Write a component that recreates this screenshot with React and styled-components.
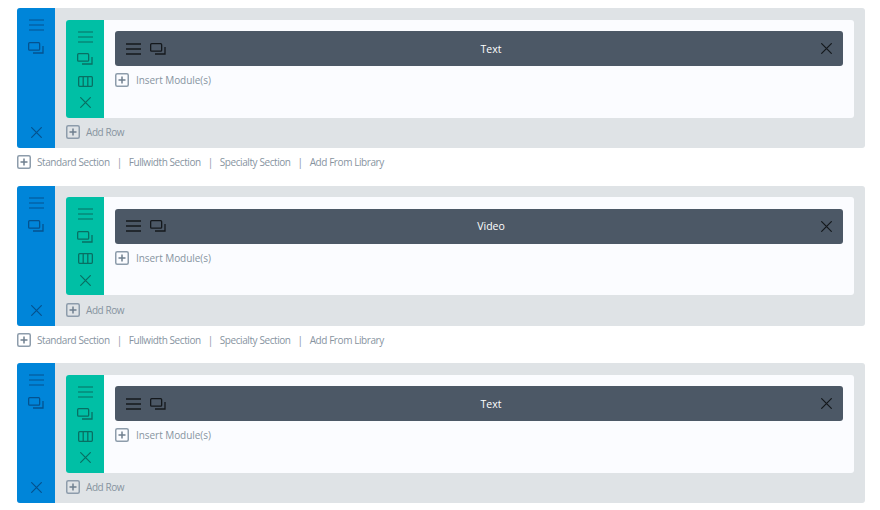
import React from 'react'
import styled, { createGlobalStyle } from 'styled-components'

const Global = createGlobalStyle`
  html, body {
    margin: 0;
    padding: 0;
    background: #fff;
    font-family: "Open Sans", "Liberation Sans", sans-serif;
  }
`

const Page = styled.div`
  width: 848px;
  padding: 8px 0 0 17px;
`

const Section = styled.div`
  display: flex;
  height: 140px;
  background: #dfe3e6;
  border-radius: 3px;
  overflow: hidden;
`

const SectionSide = styled.div`
  flex: 0 0 38px;
  display: flex;
  flex-direction: column;
  align-items: center;
  padding: 11px 0 10px;
  box-sizing: border-box;
  background: #0085d9;
  color: #04528f;
`

const CopyGap = styled.div`
  display: flex;
  margin-top: 11px;
`

const Spacer = styled.div`
  flex: 1;
`

const SectionBody = styled.div`
  flex: 1;
  display: flex;
  flex-direction: column;
  padding: 11.5px 11px 0;
`

const Row = styled.div`
  display: flex;
  height: 98px;
  background: #fbfcff;
  border-radius: 3px;
  overflow: hidden;
`

const RowSide = styled.div`
  flex: 0 0 38px;
  display: flex;
  flex-direction: column;
  align-items: center;
  gap: 10.5px;
  padding: 11px 0 0;
  box-sizing: border-box;
  background: #00bfa5;
  color: #086f63;
`

const RowBody = styled.div`
  flex: 1;
  padding: 11.5px 11px;
`

const ModuleBar = styled.div`
  position: relative;
  display: flex;
  align-items: center;
  justify-content: space-between;
  height: 35px;
  padding: 0 11.5px 0 11px;
  background: #4c5866;
  border-radius: 3px;
  color: #14181c;
`

const BarIcons = styled.div`
  display: flex;
  align-items: center;
  gap: 9px;
`

const ModuleTitle = styled.span`
  position: absolute;
  left: 24px;
  right: 0;
  text-align: center;
  font-size: 10.5px;
  color: #fff;
`

const AddLine = styled.div`
  display: flex;
  align-items: center;
  height: ${({ $h }) => $h}px;
  gap: ${({ $gap }) => $gap}px;
  font-size: 10px;
  letter-spacing: ${({ $track }) => $track}px;
  color: #87949f;
`

const SectionLinks = styled.div`
  display: flex;
  align-items: center;
  height: 37.5px;
  padding-bottom: 9px;
  box-sizing: border-box;
  font-size: 10px;
  letter-spacing: -0.42px;
  color: #87949f;
`

const FirstLink = styled.span`
  margin-left: 6px;
`

const Sep = styled.span`
  margin: 0 7px;
`

const PlusBox = styled.svg`
  display: block;
  flex: none;
`

const Plus = () => (
  <PlusBox width="14" height="14" viewBox="0 0 14 14" fill="none">
    <rect x="0.75" y="0.75" width="12.5" height="12.5" rx="1.5" stroke="#8d9cab" strokeWidth="1.5" />
    <path d="M3.5 7h7M7 3.5v7" stroke="#6f7f8f" strokeWidth="1.5" />
  </PlusBox>
)

const Menu = ({ weight = 1.1 }) => (
  <svg width="15" height="12" viewBox="0 0 15 12" fill="none" stroke="currentColor" strokeWidth={weight}>
    <path d="M0 1h15M0 6h15M0 11h15" />
  </svg>
)

const Copy = () => (
  <svg width="16" height="12" viewBox="0 0 16 12" fill="none" stroke="currentColor" strokeWidth="1.3">
    <rect x="0.65" y="0.65" width="11" height="7.5" rx="1" />
    <path d="M15 4v7H5" />
  </svg>
)

const Columns = () => (
  <svg width="15" height="11" viewBox="0 0 15 11" fill="none" stroke="currentColor" strokeWidth="1.3">
    <rect x="0.65" y="0.65" width="13.7" height="9.7" rx="1" />
    <path d="M5.2 1v9M9.8 1v9" />
  </svg>
)

const Close = () => (
  <svg width="11" height="11" viewBox="0 0 11 11" fill="none" stroke="currentColor" strokeWidth="1.2">
    <path d="M0.3 0.3l10.4 10.4M10.7 0.3L0.3 10.7" />
  </svg>
)

const Block = ({ title }) => (
  <Section>
    <SectionSide>
      <Menu />
      <CopyGap><Copy /></CopyGap>
      <Spacer />
      <Close />
    </SectionSide>
    <SectionBody>
      <Row>
        <RowSide>
          <Menu />
          <Copy />
          <Columns />
          <Close />
        </RowSide>
        <RowBody>
          <ModuleBar>
            <BarIcons>
              <Menu weight={1.5} />
              <Copy />
            </BarIcons>
            <ModuleTitle>{title}</ModuleTitle>
            <Close />
          </ModuleBar>
          <AddLine $h={28} $gap={7} $track={-0.05}>
            <Plus />
            Insert Module(s)
          </AddLine>
        </RowBody>
      </Row>
      <AddLine $h={29} $gap={6} $track={-0.42}>
        <Plus />
        Add Row
      </AddLine>
    </SectionBody>
  </Section>
)

const Links = () => (
  <SectionLinks>
    <Plus />
    <FirstLink>Standard Section</FirstLink>
    <Sep>|</Sep>
    <span>Fullwidth Section</span>
    <Sep>|</Sep>
    <span>Specialty Section</span>
    <Sep>|</Sep>
    <span>Add From Library</span>
  </SectionLinks>
)

export default function App() {
  return (
    <>
      <Global />
      <Page>
        <Block title="Text" />
        <Links />
        <Block title="Video" />
        <Links />
        <Block title="Text" />
      </Page>
    </>
  )
}
